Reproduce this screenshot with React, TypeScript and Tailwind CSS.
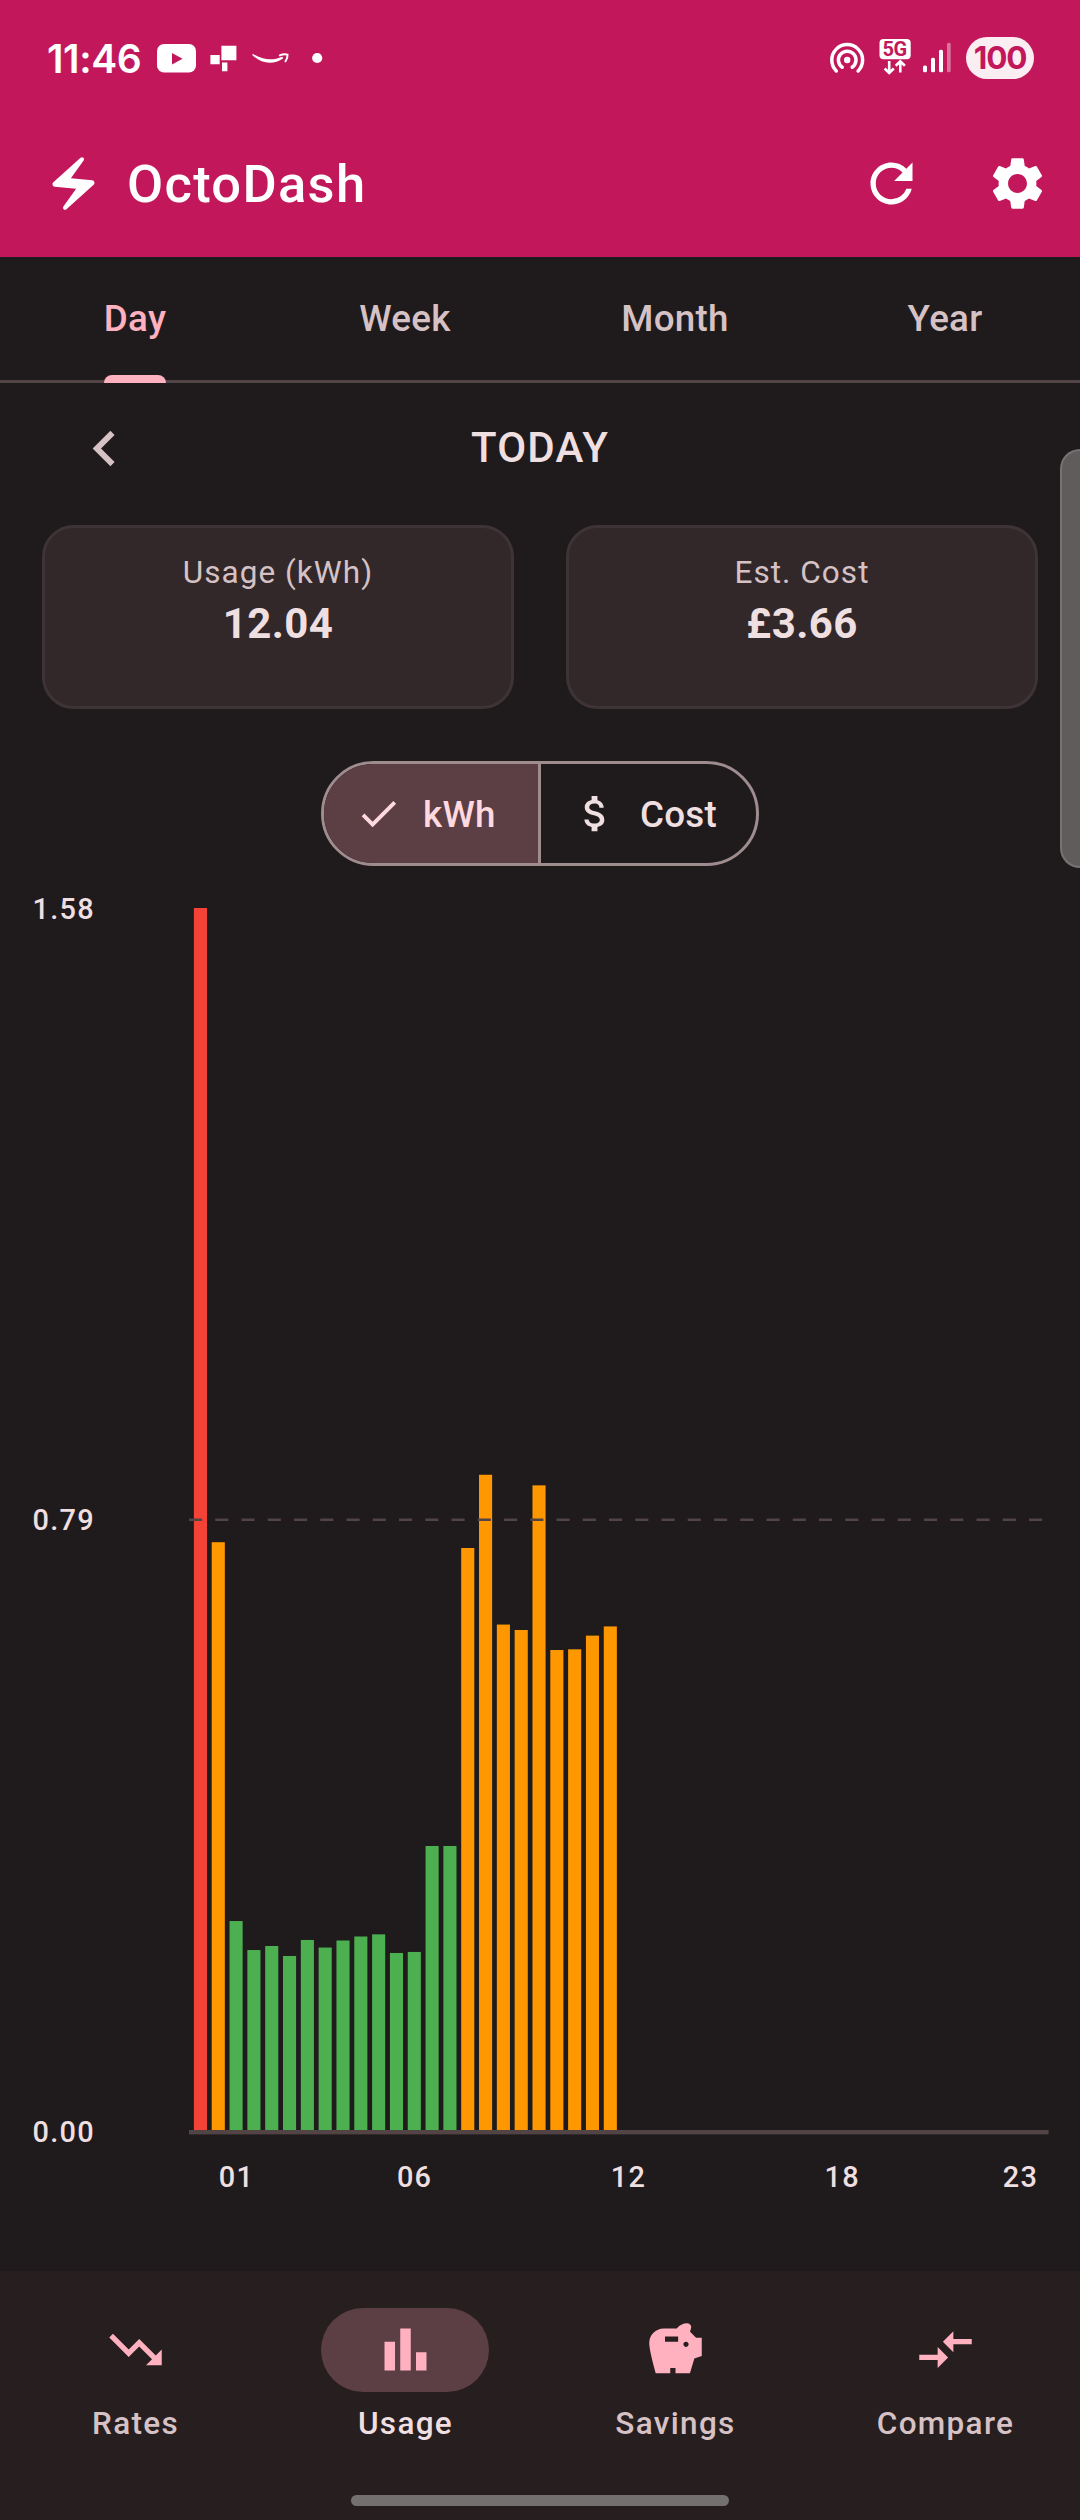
import { useState } from "react";
import type { IconType } from "react-icons";
import {
  MdAttachMoney,
  MdBarChart,
  MdCheck,
  MdChevronLeft,
  MdCompareArrows,
  MdElectricBolt,
  MdRefresh,
  MdSavings,
  MdSettings,
  MdTrendingDown,
} from "react-icons/md";

const tabs = ["Day", "Week", "Month", "Year"];

const navItems: { label: string; icon: IconType }[] = [
  { label: "Rates", icon: MdTrendingDown },
  { label: "Usage", icon: MdBarChart },
  { label: "Savings", icon: MdSavings },
  { label: "Compare", icon: MdCompareArrows },
];

// Half-hourly consumption in kWh, starting at midnight
const readings = [
  1.58, 0.76, 0.2702, 0.2327, 0.2379, 0.225, 0.2457, 0.2359, 0.245, 0.2502,
  0.253, 0.2289, 0.2302, 0.3672, 0.3672, 0.7525, 0.8472, 0.6535, 0.6465, 0.8335,
  0.6206, 0.6215, 0.6392, 0.6511,
];

const hourLabels = [
  { slot: 2, text: "01" },
  { slot: 12, text: "06" },
  { slot: 24, text: "12" },
  { slot: 36, text: "18" },
  { slot: 46, text: "23" },
];

const MAX = 1.58;
const PLOT_TOP = 42;
const PLOT_BOTTOM = 1264;
const SLOT = 17.82;

function barColor(value: number) {
  if (value > 1) return "#f44336";
  if (value > 0.5) return "#ff9800";
  return "#4caf50";
}

function StatusBar() {
  return (
    <div className="flex h-[110px] items-center pt-1.5 pr-[46px] pl-[47px] text-white">
      <span className="w-[109px] font-['Inter'] text-[39px] leading-none font-semibold tracking-[-0.4px]">
        11:46
      </span>
      <svg width="170" height="40" viewBox="156 39 170 40" fill="currentColor">
        <rect x="157" y="45" width="39" height="28.5" rx="7" />
        <path d="M172 54v11.4l10.6-5.7z" fill="#c2185b" />
        <path d="M221.4 46.7h15v14.6h-15zM210.4 56h9.3v9.2h-9.3zM222 63.4h5.4v8.8H222z" />
        <path d="M252.7 54.8c9.6 6.3 20 7.2 29.6 3l1 1.4c-9.6 7-21.6 6.200-31-3.200z" />
        <path
          d="M279.8 56.3c2.8-1.2 5.6-1.3 7.7-.7.2 1.9-.5 4.3-2 6.7"
          fill="none"
          stroke="currentColor"
          strokeWidth="2"
          strokeLinecap="round"
        />
        <circle cx="317.2" cy="59" r="5.1" />
      </svg>
      <div className="ml-auto flex items-center">
        <svg width="36" height="40" viewBox="829 39 36 40" fill="none" stroke="currentColor" strokeLinecap="round">
          <circle cx="847.2" cy="61" r="3.2" fill="currentColor" stroke="none" />
          <path d="M842.2 68.2a8.8 8.8 0 1 1 10 0" strokeWidth="3.5" />
          <path d="M836.3 71.9a15.4 15.4 0 1 1 21.8 0" strokeWidth="3.5" />
        </svg>
        <svg className="ml-3.5" width="32" height="40" viewBox="879 39 32 40">
          <rect x="879.5" y="40" width="31.2" height="20.3" rx="4" fill="currentColor" />
          <text
            x="894.7"
            y="57.3"
            textAnchor="middle"
            className="fill-[#c2185b] font-['Roboto'] text-[20px] font-bold tracking-[-0.3px]"
          >
            5G
          </text>
          <path
            d="M889.2 62v11.5m-4.6-4l4.6 4.400 4.600-4.400M900.3 73.5V63m-4.600 3.800l4.600-4.400 4.600 4.400"
            fill="none"
            stroke="currentColor"
            strokeWidth="2.6"
          />
        </svg>
        <svg className="ml-2.5" width="32" height="40" viewBox="921 39 32 40" fill="currentColor">
          <rect x="923" y="66.5" width="4" height="6.7" rx="1.5" />
          <rect x="931" y="58.7" width="4" height="14.5" rx="1.5" />
          <rect x="939" y="50.7" width="4" height="22.5" rx="1.5" />
          <rect x="947" y="43.7" width="3.7" height="29.5" rx="1.5" opacity="0.4" />
        </svg>
        <span className="ml-[13px] flex h-[42px] w-[68px] items-center justify-center rounded-full bg-[#fbeef3] font-['Inter'] text-[31.5px] leading-none font-bold tracking-[-1.2px] text-[#c2185b]">
          100
        </span>
      </div>
    </div>
  );
}

function SummaryCard({ label, value }: { label: string; value: string }) {
  return (
    <div className="h-[184px] w-[472px] rounded-[32px] border-3 border-[#3e3335] bg-[#32282a] pt-6 text-center">
      <p className="text-[31.5px] leading-[42px] tracking-[1.05px] text-[#d6c2c5]">{label}</p>
      <p className="text-[42px] leading-[60px] font-bold tracking-[0.4px] text-[#efdfe0]">{value}</p>
    </div>
  );
}

function UsageChart() {
  const scale = (PLOT_BOTTOM - PLOT_TOP) / MAX;
  const mid = (PLOT_BOTTOM + PLOT_TOP) / 2;

  return (
    <svg
      className="block fill-[#efdfe0] text-[28.9px] font-medium tracking-[1.31px]"
      width="1080"
      height="1405"
      viewBox="0 0 1080 1405"
    >
      {readings.map((value, i) => (
        <rect
          key={i}
          x={193.9 + i * SLOT}
          y={PLOT_BOTTOM - value * scale}
          width="13.1"
          height={value * scale}
          fill={barColor(value)}
        />
      ))}
      <path
        d={`M189 ${mid + 0.7}H1048`}
        stroke="#524345"
        strokeWidth="2.625"
        strokeDasharray="13.125 13.125"
      />
      <rect x="189" y={PLOT_BOTTOM} width="859.6" height="4.4" fill="#524345" />

      <text x="32.5" y="52.5">1.58</text>
      <text x="32.5" y="663.5">0.79</text>
      <text x="32.5" y="1275.5">0.00</text>
      {hourLabels.map((h) => (
        <text key={h.text} x={200.8 + h.slot * SLOT} y="1320.5" textAnchor="middle">
          {h.text}
        </text>
      ))}
    </svg>
  );
}

export default function App() {
  const [tab, setTab] = useState("Day");
  const [page, setPage] = useState("Usage");

  return (
    <div className="relative flex h-[2520px] w-[1080px] flex-col overflow-hidden bg-[#1f1b1c] font-['Roboto',sans-serif]">
      <header className="h-[257px] shrink-0 bg-[#c2185b]">
        <StatusBar />
        <div className="flex h-[147px] items-center pl-[42px] text-white">
          <MdElectricBolt size={63} />
          <h1 className="ml-[22px] pt-0.5 text-[52.5px] leading-none font-medium tracking-[1.3px]">OctoDash</h1>
          <button className="ml-auto flex size-[126px] items-center justify-center">
            <MdRefresh size={63} />
          </button>
          <button className="flex size-[126px] items-center justify-center">
            <MdSettings size={63} />
          </button>
        </div>
      </header>

      {/* Period tabs */}
      <div className="grid h-[126px] shrink-0 grid-cols-4 border-b-3 border-[#524345]">
        {tabs.map((t) => (
          <button
            key={t}
            onClick={() => setTab(t)}
            className={`flex h-[126px] justify-center text-[36.75px] font-medium tracking-[0.26px] ${
              tab === t ? "text-[#ffb1c0]" : "text-[#d6c2c5]"
            }`}
          >
            <span className="flex h-full flex-col items-center justify-between">
              <span className="pt-[34px]">{t}</span>
              {tab === t && <span className="h-2 w-full rounded-t-lg bg-[#ffb1c0]" />}
            </span>
          </button>
        ))}
      </div>

      {/* Date switcher */}
      <div className="grid h-[142px] shrink-0 grid-cols-[1fr_auto_1fr] items-center pb-[11px]">
        <button className="ml-[41px] flex size-[126px] items-center justify-center text-[#d6c2c5]">
          <MdChevronLeft size={71} />
        </button>
        <h2 className="pb-px text-[42px] leading-none font-medium tracking-[1.2px] text-[#efdfe0]">TODAY</h2>
      </div>

      <div className="flex shrink-0 justify-between px-[42px]">
        <SummaryCard label="Usage (kWh)" value="12.04" />
        <SummaryCard label="Est. Cost" value="£3.66" />
      </div>

      <div className="mx-auto mt-[52px] flex h-[105px] w-[438px] shrink-0 overflow-hidden rounded-full border-3 border-[#9f8c8f] text-[36.75px] font-medium tracking-[0.26px]">
        <button className="flex w-[217px] items-center gap-[21px] border-r-3 border-[#9f8c8f] bg-[#5c3f44] pl-[31px] text-[#ffd9df]">
          <MdCheck size={47} />
          <span className="pt-0.5">kWh</span>
        </button>
        <button className="flex flex-1 items-center gap-[21px] pl-[31px] text-[#efdfe0]">
          <MdAttachMoney size={47} />
          <span className="pt-0.5">Cost</span>
        </button>
      </div>

      <UsageChart />

      <nav className="grid flex-1 grid-cols-4 bg-[#271e1f] pt-[37px]">
        {navItems.map(({ label, icon: Icon }) => (
          <button key={label} onClick={() => setPage(label)} className="flex flex-col items-center">
            <span
              className={`flex h-[84px] w-[168px] items-center justify-center rounded-full pb-0.5 text-[#ffb1c0] ${
                page === label ? "bg-[#5c3f44]" : ""
              }`}
            >
              <Icon size={63} />
            </span>
            <span
              className={`mt-[11px] pl-px text-[31.5px] leading-[42px] font-medium tracking-[1.31px] ${
                page === label ? "text-[#efdfe0]" : "text-[#d6c2c5]"
              }`}
            >
              {label}
            </span>
          </button>
        ))}
      </nav>

      {/* Edge panel handle and gesture bar */}
      <div className="absolute top-[449px] right-0 h-[419px] w-5 rounded-l-[20px] border-2 border-r-0 border-[#767373] bg-[#605c5c]" />
      <div className="absolute bottom-3.5 left-[351px] h-[11px] w-[378px] rounded-full bg-[#747070]" />
    </div>
  );
}
